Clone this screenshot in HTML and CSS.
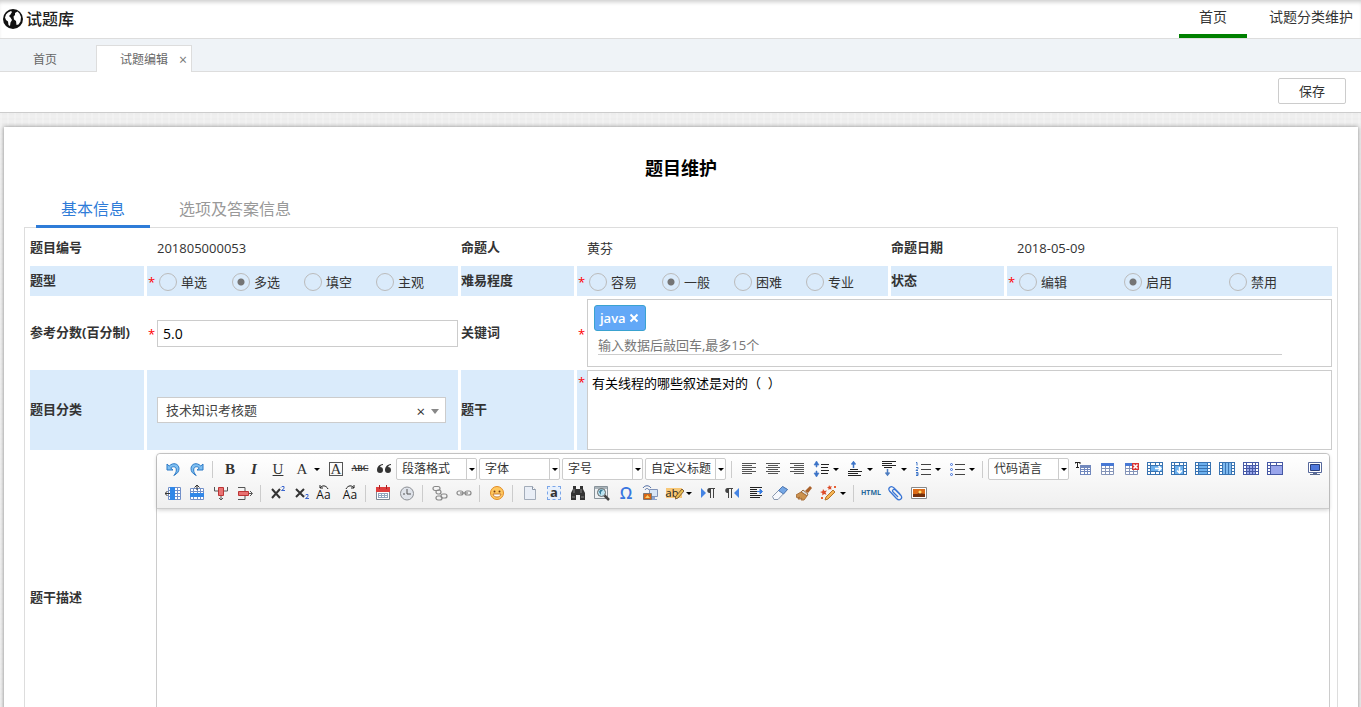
FILE: index.html
```html
<!DOCTYPE html>
<html lang="zh-CN">
<head>
    <meta charset="UTF-8">
    <title>试题库</title>
    <link rel="stylesheet" href="styles.css">
</head>
<body>
    <!-- 顶部导航 -->
    <header class="header">
        <div class="logo">
            <svg width="20" height="20" viewBox="0 0 20 20">
                <circle cx="10" cy="10" r="10" fill="#111"/>
                <path d="M5 3.500L8 2l1 1-1.500 2.500L6 7l1.500 1.500L9 11l-1.500 2.500L7 17l-1.500-1L5 12.500 3 11 2 8.500 3 5.500zM12 4l2.500-1.500 2 2L18 8l-.5 4.500-2 3-2 .5-.5-4-2-1.500-.5-3L12 6z" fill="#fff"/>
            </svg>
            <span>试题库</span>
        </div>
        <nav class="nav">
            <a class="active" href="#">首页</a>
            <a href="#">试题分类维护</a>
        </nav>
    </header>

    <!-- 页签 -->
    <div class="page-tabs">
        <a class="page-tab" href="#">首页</a>
        <div class="page-tab active">
            <a href="#">试题编辑</a>
            <button class="tab-close" type="button" aria-label="关闭">×</button>
        </div>
    </div>

    <div class="actions">
        <button class="btn-save" type="button">保存</button>
    </div>

    <main class="main">
        <form class="panel">
            <h1 class="title">题目维护</h1>
            <div class="form-tabs">
                <a class="form-tab active" href="#">基本信息</a>
                <a class="form-tab" href="#">选项及答案信息</a>
            </div>

            <div class="form-box">
                <div class="form-grid">
                    <div class="label">题目编号</div>
                    <div class="cell plain">201805000053</div>
                    <div class="label">命题人</div>
                    <div class="cell plain">黄芬</div>
                    <div class="label">命题日期</div>
                    <div class="cell plain">2018-05-09</div>

                    <div class="label shade">题型</div>
                    <div class="cell shade">
                        <span class="star">*</span>
                        <div class="radios">
                            <label><input type="radio" name="type">单选</label>
                            <label><input type="radio" name="type" checked>多选</label>
                            <label><input type="radio" name="type">填空</label>
                            <label><input type="radio" name="type">主观</label>
                        </div>
                    </div>
                    <div class="label shade">难易程度</div>
                    <div class="cell shade">
                        <span class="star">*</span>
                        <div class="radios">
                            <label><input type="radio" name="level">容易</label>
                            <label><input type="radio" name="level" checked>一般</label>
                            <label><input type="radio" name="level">困难</label>
                            <label><input type="radio" name="level">专业</label>
                        </div>
                    </div>
                    <div class="label shade">状态</div>
                    <div class="cell shade">
                        <span class="star">*</span>
                        <div class="radios three">
                            <label><input type="radio" name="status">编辑</label>
                            <label><input type="radio" name="status" checked>启用</label>
                            <label><input type="radio" name="status">禁用</label>
                        </div>
                    </div>

                    <label class="label" for="score">参考分数(百分制)</label>
                    <div class="cell">
                        <span class="star">*</span>
                        <input class="text-input" id="score" type="text" value="5.0">
                    </div>
                    <label class="label" for="keyword">关键词</label>
                    <div class="cell wide">
                        <span class="star">*</span>
                        <div class="tag-box">
                            <span class="tag">java<button type="button" aria-label="删除"><svg width="10" height="10" viewBox="0 0 10 10"><path d="M1.5 1.5l7 7M8.5 1.5l-7 7" stroke="#fff" stroke-width="2"/></svg></button></span>
                            <input class="tag-input" id="keyword" type="text" placeholder="输入数据后敲回车,最多15个">
                        </div>
                    </div>

                    <label class="label shade" for="category">题目分类</label>
                    <div class="cell plain shade">
                        <div class="category">
                            <select id="category"><option>技术知识考核题</option></select>
                            <button type="button" aria-label="清除">×</button>
                        </div>
                    </div>
                    <label class="label shade" for="stem">题干</label>
                    <div class="cell wide shade top">
                        <span class="star">*</span>
                        <textarea class="stem" id="stem">有关线程的哪些叙述是对的（  ）</textarea>
                    </div>

                    <div class="label">题干描述</div>
                    <div class="editor">
                        <!-- 富文本工具栏 -->
                        <div class="toolbar">
                            <div class="tool-row">
                                <button type="button" class="tool" title="撤销"><svg width="16" height="16" viewBox="0 0 16 16"><path d="M2 3v6h6L5.7 7C8 4.8 11.500 5.600 11.300 9c0 2-.8 3.700-2.500 5.500C12.500 12.500 14 10.500 14 7.500 13.800 2.500 8 1 4.200 5z" fill="#7fc0f2" stroke="#2b78c5"/></svg></button>
                                <button type="button" class="tool" title="重做"><svg width="16" height="16" viewBox="0 0 16 16"><path d="M14 3v6H8l2.300-2C8 4.800 4.500 5.600 4.700 9c0 2 .8 3.700 2.500 5.500C3.500 12.500 2 10.500 2 7.500 2.200 2.500 8 1 11.800 5z" fill="#7fc0f2" stroke="#2b78c5"/></svg></button>
                                <span class="sep"></span>
                                <button type="button" class="tool letter" title="加粗"><b>B</b></button>
                                <button type="button" class="tool letter" title="斜体"><b><i>I</i></b></button>
                                <button type="button" class="tool letter" title="下划线"><u>U</u></button>
                                <button type="button" class="tool letter" title="字体颜色">A</button>
                                <button type="button" class="drop" aria-label="更多颜色"></button>
                                <button type="button" class="tool letter" title="字符边框"><span class="boxed">A</span></button>
                                <button type="button" class="tool abc" title="删除线"><s>ABC</s></button>
                                <button type="button" class="tool" title="引用"><svg width="16" height="16" viewBox="0 0 16 16"><path d="M7 3C3 3.500 1 6 1 9a3 3 0 1 0 3-3c.5-1.200 1.500-2 3-2zM15 3c-4 .5-6 3-6 6a3 3 0 1 0 3-3c.5-1.200 1.500-2 3-2z" fill="#333"/></svg></button>
                                <span class="combo"><select aria-label="段落格式"><option>段落格式</option></select></span>
                                <span class="combo"><select aria-label="字体"><option>字体</option></select></span>
                                <span class="combo"><select aria-label="字号"><option>字号</option></select></span>
                                <span class="combo"><select aria-label="自定义标题"><option>自定义标题</option></select></span>
                                <span class="sep"></span>
                                <button type="button" class="tool" title="居左对齐"><svg width="16" height="16" viewBox="0 0 16 16"><path d="M1 2.500h14M1 4.500h10M1 6.500h14M1 8.500h10M1 10.500h14M1 12.500h10" stroke="#555"/></svg></button>
                                <button type="button" class="tool" title="居中对齐"><svg width="16" height="16" viewBox="0 0 16 16"><path d="M1 2.500h14M3 4.500h10M1 6.500h14M3 8.500h10M1 10.500h14M3 12.500h10" stroke="#555"/></svg></button>
                                <button type="button" class="tool" title="居右对齐"><svg width="16" height="16" viewBox="0 0 16 16"><path d="M1 2.500h14M5 4.500h10M1 6.500h14M5 8.500h10M1 10.500h14M5 12.500h10" stroke="#555"/></svg></button>
                                <button type="button" class="tool" title="行间距"><svg width="16" height="16" viewBox="0 0 16 16"><path d="M3.500 0L6 4H4v2H3V4H1zM3.500 16L6 12H4v-2H3v2H1z" fill="#3c74c8" stroke="#3c74c8" stroke-width=".6"/><path d="M8 3.500h8M8 6.500h7M8 9.500h8M8 12.500h7" stroke="#222"/></svg></button>
                                <button type="button" class="drop" aria-label="更多行间距"></button>
                                <button type="button" class="tool" title="段前距"><svg width="16" height="16" viewBox="0 0 16 16"><path d="M6.500 1v6M4.500 3.500l2-2.500 2 2.500" fill="none" stroke="#3c74c8" stroke-width="1.500"/><path d="M3 8.500h8M1 10.500h14M1 12.500h10M1 14.500h13" stroke="#222"/></svg></button>
                                <button type="button" class="drop" aria-label="更多段前距"></button>
                                <button type="button" class="tool" title="段后距"><svg width="16" height="16" viewBox="0 0 16 16"><path d="M6.500 8v6M4.500 11.500l2 2.500 2-2.500" fill="none" stroke="#4d7cc0" stroke-width="1.500"/><path d="M1 .5h14M1 2.500h10M1 4.500h14M3 6.500h8" stroke="#222"/></svg></button>
                                <button type="button" class="drop" aria-label="更多段后距"></button>
                                <button type="button" class="tool" title="有序列表"><svg width="16" height="16" viewBox="0 0 16 16"><path d="M1 1.500h1v3M1 6.500h2v1l-2 2h2M1 11.500h2v3H1m0-1.500h2" fill="none" stroke="#3c74c8"/><path d="M6 3.500h10M6 8.500h10M6 13.500h10" stroke="#444"/></svg></button>
                                <button type="button" class="drop" aria-label="更多有序列表"></button>
                                <button type="button" class="tool" title="无序列表"><svg width="16" height="16" viewBox="0 0 16 16"><g fill="none" stroke="#3c6fe0"><circle cx="2.500" cy="3.500" r="1"/><circle cx="2.500" cy="8.500" r="1"/><circle cx="2.500" cy="13.500" r="1"/></g><path d="M6 3.500h10M6 8.500h10M6 13.500h10" stroke="#444"/></svg></button>
                                <button type="button" class="drop" aria-label="更多无序列表"></button>
                                <span class="sep"></span>
                                <span class="combo"><select aria-label="代码语言"><option>代码语言</option></select></span>
                                <button type="button" class="tool" title="表格前插入行"><svg width="16" height="16" viewBox="0 0 16 16"><path d="M0 1.500h5M2.500 1v6M1 6.500h3M0 1v2M5 1v2" stroke="#222"/><path d="M5 4h11v10H5z" fill="#7188bd"/><path d="M6 7h3v1H6zm4 0h2v1h-2zm3 0h2v1h-2zM6 9h3v1H6zm4 0h2v1h-2zm3 0h2v1h-2zM6 11h3v2H6zm4 0h2v2h-2zm3 0h2v2h-2z" fill="#fff"/></svg></button>
                                <button type="button" class="tool" title="插入表格"><svg width="16" height="16" viewBox="0 0 16 16"><path d="M2.500 2.500h12v11h-12zM2.500 7.500h12M2.500 10.500h12M6.500 4v9M10.500 4v9" fill="#fff" stroke="#8494b8"/><path d="M2 2h13v3H2z" fill="#4778d4"/></svg></button>
                                <button type="button" class="tool" title="删除表格"><svg width="16" height="16" viewBox="0 0 16 16"><path d="M2.500 2.500h12v11h-12zM2.500 7.500h12M2.500 10.500h12M6.500 4v9M10.500 4v9" fill="#fff" stroke="#8494b8"/><path d="M2 2h7v3H2z" fill="#4778d4"/><path d="M9 2h7v7H9z" fill="#d93434"/><path d="M10.500 3.500l4 4M14.500 3.500l-4 4" stroke="#fff" stroke-width="1.500"/></svg></button>
                                <button type="button" class="tool" title="右合并单元格"><svg width="16" height="16" viewBox="0 0 16 16"><path d="M0 1h16v13H0z" fill="#3973b1"/><path d="M1 2h2v2H1zm0 3h2v2H1zm0 3h2v2H1zm0 3h2v2H1zM4 2h4v2H4zm5 0h3v2H9zm4 0h2v2h-2zM4 11h4v2H4zm5 0h3v2H9zm4 0h2v2h-2z" fill="#fff"/><path d="M4 5h11v5H4z" fill="#6db1ee"/><path d="M8 7.500h6M11.500 5l2.500 2.500-2.500 2.500" fill="none" stroke="#fff" stroke-width="1.500"/></svg></button>
                                <button type="button" class="tool" title="下合并单元格"><svg width="16" height="16" viewBox="0 0 16 16"><path d="M0 1h16v13H0z" fill="#3973b1"/><path d="M1 2h2v2H1zm0 3h2v2H1zm0 3h2v2H1zm0 3h2v2H1zM4 2h4v2H4zm5 0h3v2H9zm4 0h2v2h-2zm0 3h2v2h-2zm0 3h2v2h-2zm0 3h2v2h-2z" fill="#fff"/><path d="M4 5h8v8H4z" fill="#6db1ee"/><path d="M8.500 6v6M6 9.500l2.500 2.500L11 9.500" fill="none" stroke="#fff" stroke-width="1.500"/></svg></button>
                                <button type="button" class="tool" title="合并行"><svg width="16" height="16" viewBox="0 0 16 16"><path d="M0 1h16v13H0z" fill="#3973b1"/><path d="M1 2h2v2H1zm0 3h2v2H1zm0 3h2v2H1zm0 3h2v2H1zm12-9h2v2h-2zm0 3h2v2h-2zm0 3h2v2h-2zm0 3h2v2h-2z" fill="#fff"/><path d="M4 2h8v2H4zm0 3h8v2H4zm0 3h8v2H4zm0 3h8v2H4z" fill="#6db1ee"/></svg></button>
                                <button type="button" class="tool" title="合并列"><svg width="16" height="16" viewBox="0 0 16 16"><path d="M0 1h16v13H0z" fill="#3973b1"/><path d="M1 2h2v2H1zm0 3h2v2H1zm0 3h2v2H1zm0 3h2v2H1zm12-9h2v2h-2zm0 3h2v2h-2zm0 3h2v2h-2zm0 3h2v2h-2z" fill="#fff"/><path d="M4 2h2v11H4zm3 0h2v11H7zm3 0h2v11h-2z" fill="#7db9ef"/></svg></button>
                                <button type="button" class="tool" title="拆分单元格"><svg width="16" height="16" viewBox="0 0 16 16"><path d="M0 1h16v13H0z" fill="#4659a5"/><path d="M1 2h2v2H1zm3 0h5v2H4zm6 0h2v2h-2zm3 0h2v2h-2zM1 5h2v2H1zm0 3h2v2H1zm0 3h2v2H1zm12-6h2v2h-2zm0 3h2v2h-2zm0 3h2v2h-2z" fill="#fff"/><path d="M4 5h2v2H4zm3 0h2v2H7zm3 0h2v2h-2zM4 8h2v2H4zm3 0h2v2H7zm3 0h2v2h-2zm-6 3h2v2H4zm3 0h2v2H7zm3 0h2v2h-2z" fill="#9ba8ec"/></svg></button>
                                <button type="button" class="tool" title="合并单元格"><svg width="16" height="16" viewBox="0 0 16 16"><path d="M0 1h16v13H0z" fill="#4659a5"/><path d="M1 2h2v2H1zm3 0h5v2H4zm6 0h5v2h-5zM1 5h2v2H1zm0 3h2v2H1zm0 3h2v2H1z" fill="#fff"/><path d="M4 5h11v8H4z" fill="#99a5eb"/></svg></button>
                                <button type="button" class="tool last" title="全屏"><svg width="16" height="16" viewBox="0 0 16 16"><path d="M1.500 1.500h13v10h-13z" fill="#fff" stroke="#56689b"/><path d="M3.500 3.500h9v6h-9z" fill="#4f78dc" stroke="#293f7c"/><path d="M6 12h4v1h3v1H3v-1h3z" fill="#5b6c91"/></svg></button>
                            </div>
                            <div class="tool-row">
                                <button type="button" class="tool" title="前插入列"><svg width="16" height="16" viewBox="0 0 16 16"><path d="M3.500 2.500h12v12h-12zM3 5.500h13M3 8.500h13M3 11.500h13M12.500 2v13" fill="#fff" stroke="#7290c9"/><path d="M5 2h5v13H5z" fill="#3187e8"/><path d="M0 8.500h5M2.500 6L0 8.500 2.500 11" fill="none" stroke="#333"/></svg></button>
                                <button type="button" class="tool" title="前插入行"><svg width="16" height="16" viewBox="0 0 16 16"><path d="M1.500 3.500h13v11h-13zM1 6.500h14M4.500 3v12M8.500 3v12M11.500 3v12" fill="#fff" stroke="#7290c9"/><path d="M1 8h14v4H1z" fill="#3187e8"/><path d="M8 0v5M5.500 2.500L8 0l2.500 2.500" fill="none" stroke="#333"/></svg></button>
                                <button type="button" class="tool" title="删除列"><svg width="16" height="16" viewBox="0 0 16 16"><path d="M1.500 2v4H5M14.500 2v4H11M8 11v4M6 13l2 2 2-2" fill="none" stroke="#555"/><path d="M5.500 2.500h5v8h-5z" fill="#e87272" stroke="#bc3434"/></svg></button>
                                <button type="button" class="tool" title="删除行"><svg width="16" height="16" viewBox="0 0 16 16"><path d="M1 2.500h7V6M1 14.500h7V11M11 8.500h4M13 6l2.500 2.500L13 11" fill="none" stroke="#555"/><path d="M1.500 6.500h10v4h-10z" fill="#e87272" stroke="#bc3434"/></svg></button>
                                <span class="sep"></span>
                                <button type="button" class="tool" title="上标"><svg width="16" height="16" viewBox="0 0 16 16"><path d="M2 4l8 9M10 4l-8 9" stroke="#333" stroke-width="2"/><path d="M11 2.500l1-1h2v2l-2.500 2H15" fill="none" stroke="#3b66ce"/></svg></button>
                                <button type="button" class="tool" title="下标"><svg width="16" height="16" viewBox="0 0 16 16"><path d="M2 4l8 8M10 4l-8 8" stroke="#333" stroke-width="2"/><path d="M11 10.500l1-1h2v2l-2.500 2H15" fill="none" stroke="#3b66ce"/></svg></button>
                                <button type="button" class="tool case" title="字母大写"><svg width="10" height="5" viewBox="0 0 10 5"><path d="M1 0v3h3M1 3c2-3 6-3 8 1" fill="none" stroke="#222"/></svg>Aa</button>
                                <button type="button" class="tool case" title="字母小写"><svg width="10" height="5" viewBox="0 0 10 5"><path d="M9 0v3H6M9 3C7 0 3 0 1 4" fill="none" stroke="#222"/></svg>Aa</button>
                                <span class="sep"></span>
                                <button type="button" class="tool" title="日期"><svg width="16" height="16" viewBox="0 0 16 16"><path d="M1.500 2.500h13v12h-13z" fill="#fff" stroke="#7d8793"/><path d="M1 2h14v5H1z" fill="#df3e3e"/><path d="M4.500 0v4M11.500 0v4" stroke="#aa2020"/><path d="M3 8h10v5H3z" fill="#91a5be"/><path d="M4 9h2v1H4zm3 0h2v1H7zm3 0h2v1h-2zm-6 2h2v1H4zm3 0h2v1H7zm3 0h2v1h-2z" fill="#fff"/></svg></button>
                                <button type="button" class="tool" title="时间"><svg width="16" height="16" viewBox="0 0 16 16"><circle cx="8" cy="8.500" r="6.500" fill="#dfe3ea" stroke="#8c8f94"/><path d="M8 4v5h4M4 9h2" fill="none" stroke="#555"/></svg></button>
                                <span class="sep"></span>
                                <button type="button" class="tool" title="取消链接"><svg width="16" height="16" viewBox="0 0 16 16"><g fill="none" stroke="#888" stroke-width="1.200"><rect x="1" y="1.500" width="7" height="4" rx="2"/><rect x="4" y="5" width="5" height="4" rx="2"/><rect x="4" y="11" width="6" height="4" rx="2"/><rect x="9" y="9" width="6" height="4" rx="2"/></g></svg></button>
                                <button type="button" class="tool" title="超链接"><svg width="16" height="16" viewBox="0 0 16 16"><g fill="none" stroke="#888" stroke-width="1.200"><rect x="1" y="6" width="6" height="4" rx="2"/><rect x="9" y="6" width="6" height="4" rx="2"/><path d="M4 8h8"/></g></svg></button>
                                <span class="sep"></span>
                                <button type="button" class="tool" title="表情"><svg width="16" height="16" viewBox="0 0 16 16"><circle cx="8" cy="8" r="6.500" fill="#ffc860" stroke="#e28b24"/><circle cx="5.500" cy="6.500" r="1" fill="#773b12"/><circle cx="10.500" cy="6.500" r="1" fill="#773b12"/><path d="M4 9h8c-.5 4-7.500 4-8 0z" fill="#fff" stroke="#b8661e" stroke-width=".8"/></svg></button>
                                <span class="sep"></span>
                                <button type="button" class="tool" title="清空文档"><svg width="16" height="16" viewBox="0 0 16 16"><path d="M2.500 1.500h8l3 3v10h-11z" fill="#e9eef6" stroke="#a3acb9"/><path d="M10.500 1.500v3h3" fill="#fff" stroke="#8b96a6"/></svg></button>
                                <button type="button" class="tool" title="锚点"><span class="anchor">a</span></button>
                                <button type="button" class="tool" title="查询替换"><svg width="16" height="16" viewBox="0 0 16 16"><path d="M3 1h3v3h4V1h3v3l2 4v7h-5v-5H6v5H1V8l2-4z" fill="#333"/><path d="M4 4v4M11 4v4M2 12h3M11 12h3" stroke="#858585"/></svg></button>
                                <button type="button" class="tool" title="预览"><svg width="16" height="16" viewBox="0 0 16 16"><path d="M.5 1.500h13v12H.5z" fill="#eef1f3" stroke="#89939a"/><path d="M1 2h12v2H1z" fill="#a9b3b9"/><path d="M10 10l5 5" stroke="#444" stroke-width="2.500"/><circle cx="7.500" cy="7.500" r="4" fill="#bce4f2" stroke="#666"/><path d="M5 7c1-3 3-3 4-2L7 7v3z" fill="#377c98"/></svg></button>
                                <button type="button" class="tool omega" title="特殊字符">Ω</button>
                                <button type="button" class="tool" title="图片转存"><svg width="16" height="16" viewBox="0 0 16 16"><path d="M1 3c2-3 6-3 8 0M3 5c1-2 3-2 4 0" fill="none" stroke="#526ea4"/><path d="M7.500 4.500h8v7h-8z" fill="#d7e5f7" stroke="#8294b9"/><path d="M10 12h3v2h2v1H9z" fill="#8aa2d0"/><path d="M1.500 8.500h8v6h-8z" fill="#d86612" stroke="#7d7771"/><path d="M3 13l2.500-3L8 13z" fill="#ffcf68"/></svg></button>
                                <button type="button" class="tool" title="背景色"><span class="mark">ab</span><svg class="pen" width="9" height="12" viewBox="0 0 9 12"><path d="M7 1l2 2-6 7-3 1 1-3z" fill="#e6bd52" stroke="#815d35"/></svg></button>
                                <button type="button" class="drop" aria-label="更多背景色"></button>
                                <button type="button" class="tool" title="从左向右输入"><svg width="16" height="16" viewBox="0 0 16 16"><path d="M1 3l5 5-5 5z" fill="#4584e4"/><path d="M15 3H9.500C6.500 3 6.500 8 9.500 8h.5v5h1V4h2v9h1V4h1z" fill="#444"/></svg></button>
                                <button type="button" class="tool" title="从右向左输入"><svg width="16" height="16" viewBox="0 0 16 16"><path d="M15 3l-5 5 5 5z" fill="#4584e4"/><path d="M9 3H3.500C.5 3 .5 8 3.500 8H4v5h1V4h2v9h1V4h1z" fill="#444"/></svg></button>
                                <button type="button" class="tool" title="首行缩进"><svg width="16" height="16" viewBox="0 0 16 16"><path d="M2 2.500h12M2 4.500h7M2 6.500h7M2 8.500h7M2 10.500h12M2 12.500h10" stroke="#222"/><path d="M9 6.500h4M12 4l2.500 2.500L12 9z" fill="#397cdf" stroke="#397cdf"/></svg></button>
                                <button type="button" class="tool" title="清除格式"><svg width="16" height="16" viewBox="0 0 16 16"><path d="M.5 11.500l10-10 5 3-9.500 10H2z" fill="#f6f8fc" stroke="#8998ae"/><path d="M6.500 5.500l4-4 5 3-4 4.500z" fill="#75a7e5" stroke="#5079b3"/></svg></button>
                                <button type="button" class="tool" title="格式刷"><svg width="16" height="16" viewBox="0 0 16 16"><path d="M14 1l2 2-4 5-3-2z" fill="#a9612a"/><path d="M7 5l5 4-1 2-6-4z" fill="#ddd" stroke="#9a6b3c"/><path d="M5 7l6 4-3 4H5l1-2-2 1H2l2-2-3 1-1-3z" fill="#cc924d" stroke="#a9713c"/></svg></button>
                                <button type="button" class="tool" title="自动排版"><svg width="16" height="16" viewBox="0 0 16 16"><path d="M13 5l2 2-7 7-3 1 1-3z" fill="#f5b454" stroke="#b57528"/><path d="M3 4l1.500 2L7 5.500 5.500 7.500l1 2.200-2.300-.7-1.900 1.500V8L0 7l2.500-.8zM9 0l1 1.500 2-.2-1 1.500.5 1.700-1.700-.5L8.500 5V3.200L7 2.300l1.700-.5z" fill="#dd4c29"/><path d="M1 12h2v2H1zM14 1h2v2h-2z" fill="#e65f32"/></svg></button>
                                <button type="button" class="drop" aria-label="更多排版"></button>
                                <span class="sep"></span>
                                <button type="button" class="tool html" title="源代码">HTML</button>
                                <button type="button" class="tool" title="附件"><svg width="16" height="16" viewBox="0 0 16 16"><path d="M13 9L7 3C4 0 .5 3 2.500 6l7 7.500c3 3 6.500 0 4.500-3L8.500 5C6.500 3.500 4.500 5.500 6 7l5 5" fill="none" stroke="#3975d5" stroke-width="1.300"/></svg></button>
                                <button type="button" class="tool" title="图片"><svg width="16" height="16" viewBox="0 0 16 16"><path d="M.5 2.500h15v11H.5z" fill="#fff" stroke="#888"/><path d="M2 4h12v8H2z" fill="#dd6b16"/><path d="M2 9h4l2-1 6 1v3H2z" fill="#74300c"/><circle cx="9" cy="7" r="1.500" fill="#ffdf6d"/></svg></button>
                            </div>
                        </div>
                        <div class="editor-body" contenteditable="true" role="textbox" aria-label="题干描述"></div>
                    </div>
                </div>
            </div>
        </form>
    </main>
</body>
</html>
```
FILE: styles.css
```css
* {
    box-sizing: border-box;
}
body {
    margin: 0;
    height: 100vh;
    display: flex;
    flex-direction: column;
    overflow: hidden;
    background: #fff;
    color: #333;
    font-family: "Open Sans", "Noto Sans CJK SC", sans-serif;
    font-size: 13px;
    line-height: 20px;
}
a {
    color: inherit;
    text-decoration: none;
}
button, input, select, textarea {
    font: inherit;
    color: inherit;
    margin: 0;
}
button {
    padding: 0;
    border: 0;
    background: none;
    cursor: pointer;
}
select {
    appearance: none;
}

/* 顶部 */
.header {
    flex: none;
    height: 39px;
    display: flex;
    justify-content: space-between;
    border-bottom: 1px solid #ddd;
    box-shadow: inset 0 4px 4px -2px #ccc;
}
.logo {
    display: flex;
    align-items: center;
    gap: 3px;
    padding-left: 3px;
    font-size: 16px;
    font-weight: 500;
    color: #222;
}
.nav {
    display: flex;
    gap: 2px;
    font-size: 14px;
}
.nav a {
    height: 38px;
    padding: 7px 20px 0;
    border-bottom: 4px solid transparent;
}
.nav a:last-child {
    padding-right: 8px;
}
.nav a.active {
    border-color: #008000;
}

/* 页签 */
.page-tabs {
    flex: none;
    height: 33px;
    display: flex;
    align-items: flex-end;
    background: #eff3f7;
    border-bottom: 1px solid #ddd;
    font-size: 12px;
    color: #666;
}
.page-tab {
    width: 96px;
    height: 27px;
    padding: 6px 0 0 33px;
}
.page-tab.active {
    display: flex;
    justify-content: space-between;
    padding: 4px 4px 0 23px;
    margin-bottom: -1px;
    border: 1px solid #ddd;
    border-bottom: 0;
    background: #fff;
}
.tab-close {
    height: 18px;
    font-size: 14px;
    color: #777;
}
.actions {
    flex: none;
    height: 41px;
    display: flex;
    align-items: center;
    justify-content: flex-end;
    padding: 0 15px 2px;
    border-bottom: 1px solid #ccc;
}
.btn-save {
    width: 68px;
    height: 26px;
    border: 1px solid #ccc;
    border-radius: 2px;
    background: #fff;
}

/* 主体 */
.main {
    flex: 1;
    min-height: 0;
    overflow-y: auto;
    scrollbar-width: none;
    padding: 14px 3px 20px 4px;
    background: repeating-linear-gradient(90deg, rgba(255,255,255,0.2) 0 2px, transparent 2px 7px), repeating-linear-gradient(#ededed 0 2px, #efefef 2px 5px);
}
.panel {
    padding: 27px 20px 20px;
    background: #fff;
    box-shadow: 0 0 4px #888;
}
.title {
    margin: 0;
    font-size: 18px;
    line-height: 28px;
    text-align: center;
    color: #000;
}
.form-tabs {
    position: relative;
    display: flex;
    gap: 4px;
    padding: 10px 0 0 12px;
    margin-bottom: -1px;
    font-size: 16px;
    color: #999;
}
.form-tab {
    height: 36px;
    padding: 7px 25px 0;
    border-bottom: 3px solid transparent;
}
.form-tab.active {
    color: #2f7cd8;
    border-color: #2f7cd8;
}
.form-box {
    padding: 5px;
    border: 1px solid #ddd;
}
.form-grid {
    display: grid;
    grid-template-columns: 114fr 311fr 113fr 311fr 113fr 325fr;
    grid-template-rows: 30px 30px 68px 80px 290px;
    gap: 3px;
}
.label {
    display: flex;
    align-items: center;
    padding-bottom: 2px;
    font-weight: bold;
}
.shade {
    background: #daebfb;
}
.cell {
    min-width: 0;
    display: flex;
    align-items: center;
}
.plain {
    padding-left: 10px;
}
.wide {
    grid-column: span 3;
}
.top {
    align-items: flex-start;
}
.star {
    flex: none;
    width: 10px;
    padding: 2px 0 0 1px;
    color: red;
}

/* 单选 */
.radios {
    flex: 1;
    display: flex;
    padding-left: 2px;
}
.radios label {
    width: 72px;
    display: flex;
    align-items: center;
    gap: 4px;
    padding-top: 2px;
    white-space: nowrap;
}
.radios label:first-child {
    width: 73px;
}
.radios.three label {
    width: 105px;
}
.radios input {
    appearance: none;
    width: 18px;
    height: 18px;
    border: 1px solid #bbb;
    border-radius: 50%;
}
.radios input:checked {
    background: radial-gradient(circle, #757575 3px, transparent 4px);
}

.text-input {
    flex: 1;
    min-width: 0;
    height: 27px;
    padding: 0 5px;
    border: 1px solid #ccc;
    background: #fff;
    color: #000;
    font-size: 14px;
}
.tag-box {
    flex: 1;
    height: 68px;
    padding: 5px 49px 0 6px;
    border: 1px solid #ccc;
    background: #fff;
}
.tag {
    display: flex;
    align-items: center;
    gap: 3px;
    width: 52px;
    height: 26px;
    padding-left: 5px;
    border: 1px solid #3aa2d0;
    border-radius: 3px;
    background: #62a8f7;
    color: #fff;
    font-weight: 600;
}
.tag button {
    display: flex;
}
.tag-input {
    display: block;
    width: calc(100% - 4px);
    height: 24px;
    margin-left: 4px;
    padding: 4px 0 0;
    border: 0;
    border-bottom: 1px solid #ccc;
    outline: none;
}
.tag-input::placeholder {
    color: #777;
}
.category {
    position: relative;
    width: calc(100% - 12px);
}
.category select {
    display: block;
    width: 100%;
    height: 26px;
    padding: 0 40px 0 8px;
    border: 1px solid #ccc;
    border-radius: 0;
    background: #fff;
    color: #444;
}
.category button {
    position: absolute;
    right: 21px;
    top: 4px;
    font-size: 15px;
}
.category::after {
    content: "";
    position: absolute;
    right: 7px;
    top: 12px;
    border: 4px solid transparent;
    border-top: 5px solid #888;
    border-bottom: 0;
}
.stem {
    flex: 1;
    height: 80px;
    padding: 2px 4px;
    border: 1px solid #ccc;
    background: #fff;
    color: #000;
    resize: none;
}

/* 编辑器 */
.editor {
    grid-column: span 5;
    display: flex;
    flex-direction: column;
    margin: 0 2px 0 9px;
    border: 1px solid #ccc;
    border-radius: 4px;
}
.toolbar {
    position: relative;
    padding: 3px 2px 3px 4px;
    border-bottom: 1px solid #ccc;
    border-radius: 4px 4px 0 0;
    background: linear-gradient(#fff, #efefef);
    box-shadow: 0 1px 4px rgba(0,0,0,0.2);
}
.tool-row {
    display: flex;
    align-items: center;
    height: 24px;
}
.tool {
    position: relative;
    flex: none;
    width: 24px;
    height: 24px;
    display: flex;
    align-items: center;
    justify-content: center;
}
.tool.last {
    margin-left: auto;
}
.drop {
    flex: none;
    width: 10px;
    height: 24px;
}
.drop::before {
    content: "";
    display: block;
    border: 3px solid transparent;
    border-top-color: #000;
    border-bottom: 0;
    width: 0;
}
.sep {
    flex: none;
    width: 1px;
    height: 17px;
    margin: 0 5px 0 3px;
    background: #ccc;
}
.combo {
    position: relative;
    flex: none;
    width: 81px;
    margin-right: 2px;
    font-size: 12px;
}
.combo select {
    display: block;
    width: 100%;
    height: 22px;
    padding: 0 11px 0 5px;
    border: 1px solid #ccc;
    border-radius: 2px;
    background: #fff;
}
.combo::before {
    content: "";
    position: absolute;
    right: 10px;
    top: 1px;
    height: 20px;
    border-left: 1px solid #ccc;
}
.combo::after {
    content: "";
    position: absolute;
    right: 2px;
    top: 10px;
    border: 3px solid transparent;
    border-top-color: #000;
    border-bottom: 0;
}
.letter {
    font-family: "Liberation Serif", serif;
    font-size: 15px;
    color: #333;
}
.boxed {
    width: 14px;
    height: 14px;
    border: 1px solid #555;
    line-height: 13px;
}
.abc {
    font-family: "Liberation Serif", serif;
    font-size: 8px;
    font-weight: bold;
}
.case {
    flex-direction: column;
    padding: 0 5px 2px 0;
    font-size: 12px;
    line-height: 10px;
    color: #111;
}
.case + .case {
    padding: 0 0 2px;
}
.anchor {
    width: 14px;
    height: 14px;
    border: 1px dashed #7ba6e8;
    background: #e7f0fc;
    font-weight: bold;
    line-height: 10px;
}
.omega {
    font-size: 16px;
    font-weight: 600;
    color: #3975e0;
}
.mark {
    padding-right: 4px;
    background: #f8c877;
    font-size: 11px;
    line-height: 10px;
    color: #222;
}
.pen {
    position: absolute;
    right: 2px;
    top: 7px;
}
.html {
    font-size: 7px;
    font-weight: bold;
    color: #286a9c;
}
.editor-body {
    flex: 1;
    background: #fff;
}
```
